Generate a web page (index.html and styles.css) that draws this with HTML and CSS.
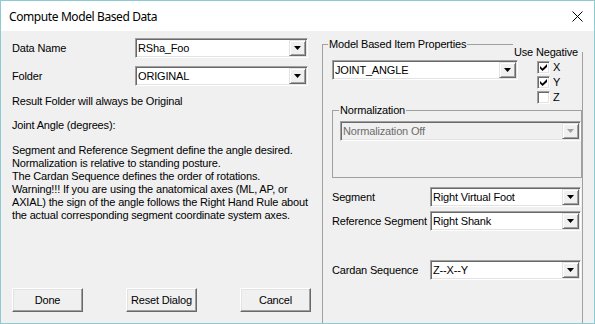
FILE: index.html
```html
<!DOCTYPE html>
<html>
<head>
<meta charset="utf-8">
<link rel="stylesheet" href="styles.css">
</head>
<body>
<div class="window">
  <div class="titlebar">
    <span class="title">Compute Model Based Data</span>
    <svg class="close" width="11" height="11" viewBox="0 0 11 11"><path d="M0.5 0.5L10.5 10.5M10.5 0.5L0.5 10.5" stroke="#000" stroke-width="1" fill="none"/></svg>
  </div>
  <div class="content">
    <div class="left">
      <div class="row first">
        <span class="lbl">Data Name</span>
        <div class="combo w-left"><span class="ctext">RSha_Foo</span><span class="cbtn"><svg width="7" height="4" viewBox="0 0 7 4"><path d="M0 0H7L3.5 4Z"/></svg></span></div>
      </div>
      <div class="row">
        <span class="lbl">Folder</span>
        <div class="combo w-left"><span class="ctext">ORIGINAL</span><span class="cbtn"><svg width="7" height="4" viewBox="0 0 7 4"><path d="M0 0H7L3.5 4Z"/></svg></span></div>
      </div>
      <div class="note">Result Folder will always be Original</div>
      <div class="note2">Joint Angle (degrees):</div>
      <div class="para">Segment and Reference Segment define the angle desired.<br>Normalization is relative to standing posture.<br>The Cardan Sequence defines the order of rotations.<br>Warning!!! If you are using the anatomical axes (ML, AP, or<br>AXIAL) the sign of the angle follows the Right Hand Rule about<br>the actual corresponding segment coordinate system axes.</div>
      <div class="buttons">
        <div class="btn">Done</div>
        <div class="btn">Reset Dialog</div>
        <div class="btn">Cancel</div>
      </div>
    </div>
    <div class="props-wrap">
      <fieldset class="group props">
        <legend class="lg-props">Model Based Item Properties</legend>
        <div class="top">
          <div class="combo w-joint"><span class="ctext">JOINT_ANGLE</span><span class="cbtn"><svg width="7" height="4" viewBox="0 0 7 4"><path d="M0 0H7L3.5 4Z"/></svg></span></div>
          <div class="checks">
            <div class="chk-row"><span class="chk"><svg width="7" height="7" viewBox="0 0 7 7"><path d="M0 2L2.5 4.5L7 0V3L2.5 7L0 4.5Z"/></svg></span><span>X</span></div>
            <div class="chk-row"><span class="chk"><svg width="7" height="7" viewBox="0 0 7 7"><path d="M0 2L2.5 4.5L7 0V3L2.5 7L0 4.5Z"/></svg></span><span>Y</span></div>
            <div class="chk-row"><span class="chk"></span><span>Z</span></div>
          </div>
        </div>
        <fieldset class="group norm">
          <legend class="lg-norm">Normalization</legend>
          <div class="combo disabled w-norm"><span class="ctext">Normalization Off</span><span class="cbtn"><svg width="7" height="4" viewBox="0 0 7 4"><path d="M0 0H7L3.5 4Z"/></svg></span></div>
        </fieldset>
        <div class="srow seg">
          <span class="slbl">Segment</span>
          <div class="combo w-seg"><span class="ctext">Right Virtual Foot</span><span class="cbtn"><svg width="7" height="4" viewBox="0 0 7 4"><path d="M0 0H7L3.5 4Z"/></svg></span></div>
        </div>
        <div class="srow ref">
          <span class="slbl">Reference Segment</span>
          <div class="combo w-seg"><span class="ctext">Right Shank</span><span class="cbtn"><svg width="7" height="4" viewBox="0 0 7 4"><path d="M0 0H7L3.5 4Z"/></svg></span></div>
        </div>
        <div class="srow cardan">
          <span class="slbl">Cardan Sequence</span>
          <div class="combo w-seg"><span class="ctext">Z--X--Y</span><span class="cbtn"><svg width="7" height="4" viewBox="0 0 7 4"><path d="M0 0H7L3.5 4Z"/></svg></span></div>
        </div>
      </fieldset>
      <div class="useneg">Use Negative</div>
    </div>
  </div>
</div>
</body>
</html>
```
FILE: styles.css
```css
* { box-sizing: border-box; }
body { margin: 0; }
.window {
  width: 595px; height: 324px;
  border: 1px solid #8ccbd3;
  background: #f0f0f0;
  overflow: hidden;
  font-family: "Liberation Sans", Arial, sans-serif;
  font-size: 11px;
  line-height: 13px;
  letter-spacing: -0.17px;
  color: #000;
  display: flex; flex-direction: column;
}
.titlebar {
  height: 30px; flex: none;
  background: #fff;
  display: flex; align-items: center; justify-content: space-between;
  padding: 0 11px 0 8px;
}
.title {
  font-family: "Segoe UI", "Noto Sans", sans-serif;
  font-size: 12px; letter-spacing: -0.4px; color: #000;
}
.close { display: block; }
.content { flex: 1; min-height: 0; display: flex; padding-left: 11px; gap: 11px; }
.left { width: 299px; flex: none; display: flex; flex-direction: column; padding-bottom: 11px; }
.row { display: flex; align-items: center; height: 20px; margin-top: 8px; }
.row.first { margin-top: 7px; }
.lbl { width: 123px; flex: none; }
.note { margin-top: 9px; white-space: nowrap; }
.note2 { margin-top: 11px; white-space: nowrap; }
.para { margin-top: 12px; white-space: nowrap; }
.buttons { margin-top: auto; display: flex; justify-content: space-between; }
.btn {
  width: 71px; height: 24px;
  background: #f0f0f0;
  border: 1px solid; border-color: #fff #696969 #696969 #fff;
  box-shadow: inset -1px -1px 0 #a0a0a0, inset 1px 1px 0 #e3e3e3;
  display: flex; align-items: center; justify-content: center;
}

/* combo box */
.combo {
  display: flex; align-items: center;
  height: 20px; flex: none;
  background: #fff;
  border: 1px solid; border-color: #a0a0a0 #fff #fff #a0a0a0;
  box-shadow: inset 1px 1px 0 #696969, inset -1px -1px 0 #e3e3e3;
  padding: 1px;
}
.ctext { flex: 1; padding-left: 1px; white-space: nowrap; overflow: hidden; }
.cbtn {
  width: 17px; height: 16px; flex: none;
  background: #f0f0f0;
  border: 1px solid; border-color: #e3e3e3 #696969 #696969 #e3e3e3;
  box-shadow: inset 1px 1px 0 #fff, inset -1px -1px 0 #a0a0a0;
  display: flex; align-items: center; justify-content: center;
}
.cbtn svg { display: block; fill: #000; }
.combo.disabled { background: #f0f0f0; }
.combo.disabled .ctext { color: #6d6d6d; }
.combo.disabled .cbtn svg { fill: #a0a0a0; }
.w-left { width: 173px; }
.w-joint { width: 186px; }
.w-norm { width: 241px; }
.w-seg { width: 151px; }

/* group boxes */
.props-wrap { position: relative; width: 261px; flex: none; margin-top: 7px; }
.group { margin: 0; border: 1px solid #a0a0a0; min-width: 0; }
.props { height: 300px; padding: 9px 0 0 9px; }
.group legend { padding: 0 1px; line-height: 13px; white-space: nowrap; }
.lg-props { margin-left: -4px; }
.lg-norm { margin-left: -1px; }
.top { display: flex; align-items: flex-start; height: 45px; }
.checks { margin-left: 19px; display: flex; flex-direction: column; }
.chk-row { height: 15px; display: flex; align-items: center; gap: 3px; }
.chk {
  width: 13px; height: 13px; flex: none;
  background: #fff;
  border: 1px solid; border-color: #a0a0a0 #fff #fff #a0a0a0;
  box-shadow: inset 1px 1px 0 #696969, inset -1px -1px 0 #e3e3e3;
  display: flex; align-items: center; justify-content: center;
}
.chk svg { display: block; fill: #000; }
.norm { margin-top: -1px; padding: 4px 0 36px 7px; }
.srow { display: flex; align-items: center; }
.slbl { width: 98px; flex: none; white-space: nowrap; }
.seg { margin-top: 9px; }
.ref { margin-top: 4px; }
.cardan { margin-top: 29px; }
.useneg {
  position: absolute; left: 191px; top: 3px;
  width: 70px; height: 11px;
  padding: 5px 0 0 1px;
  background: #f0f0f0;
  white-space: nowrap;
}
```
